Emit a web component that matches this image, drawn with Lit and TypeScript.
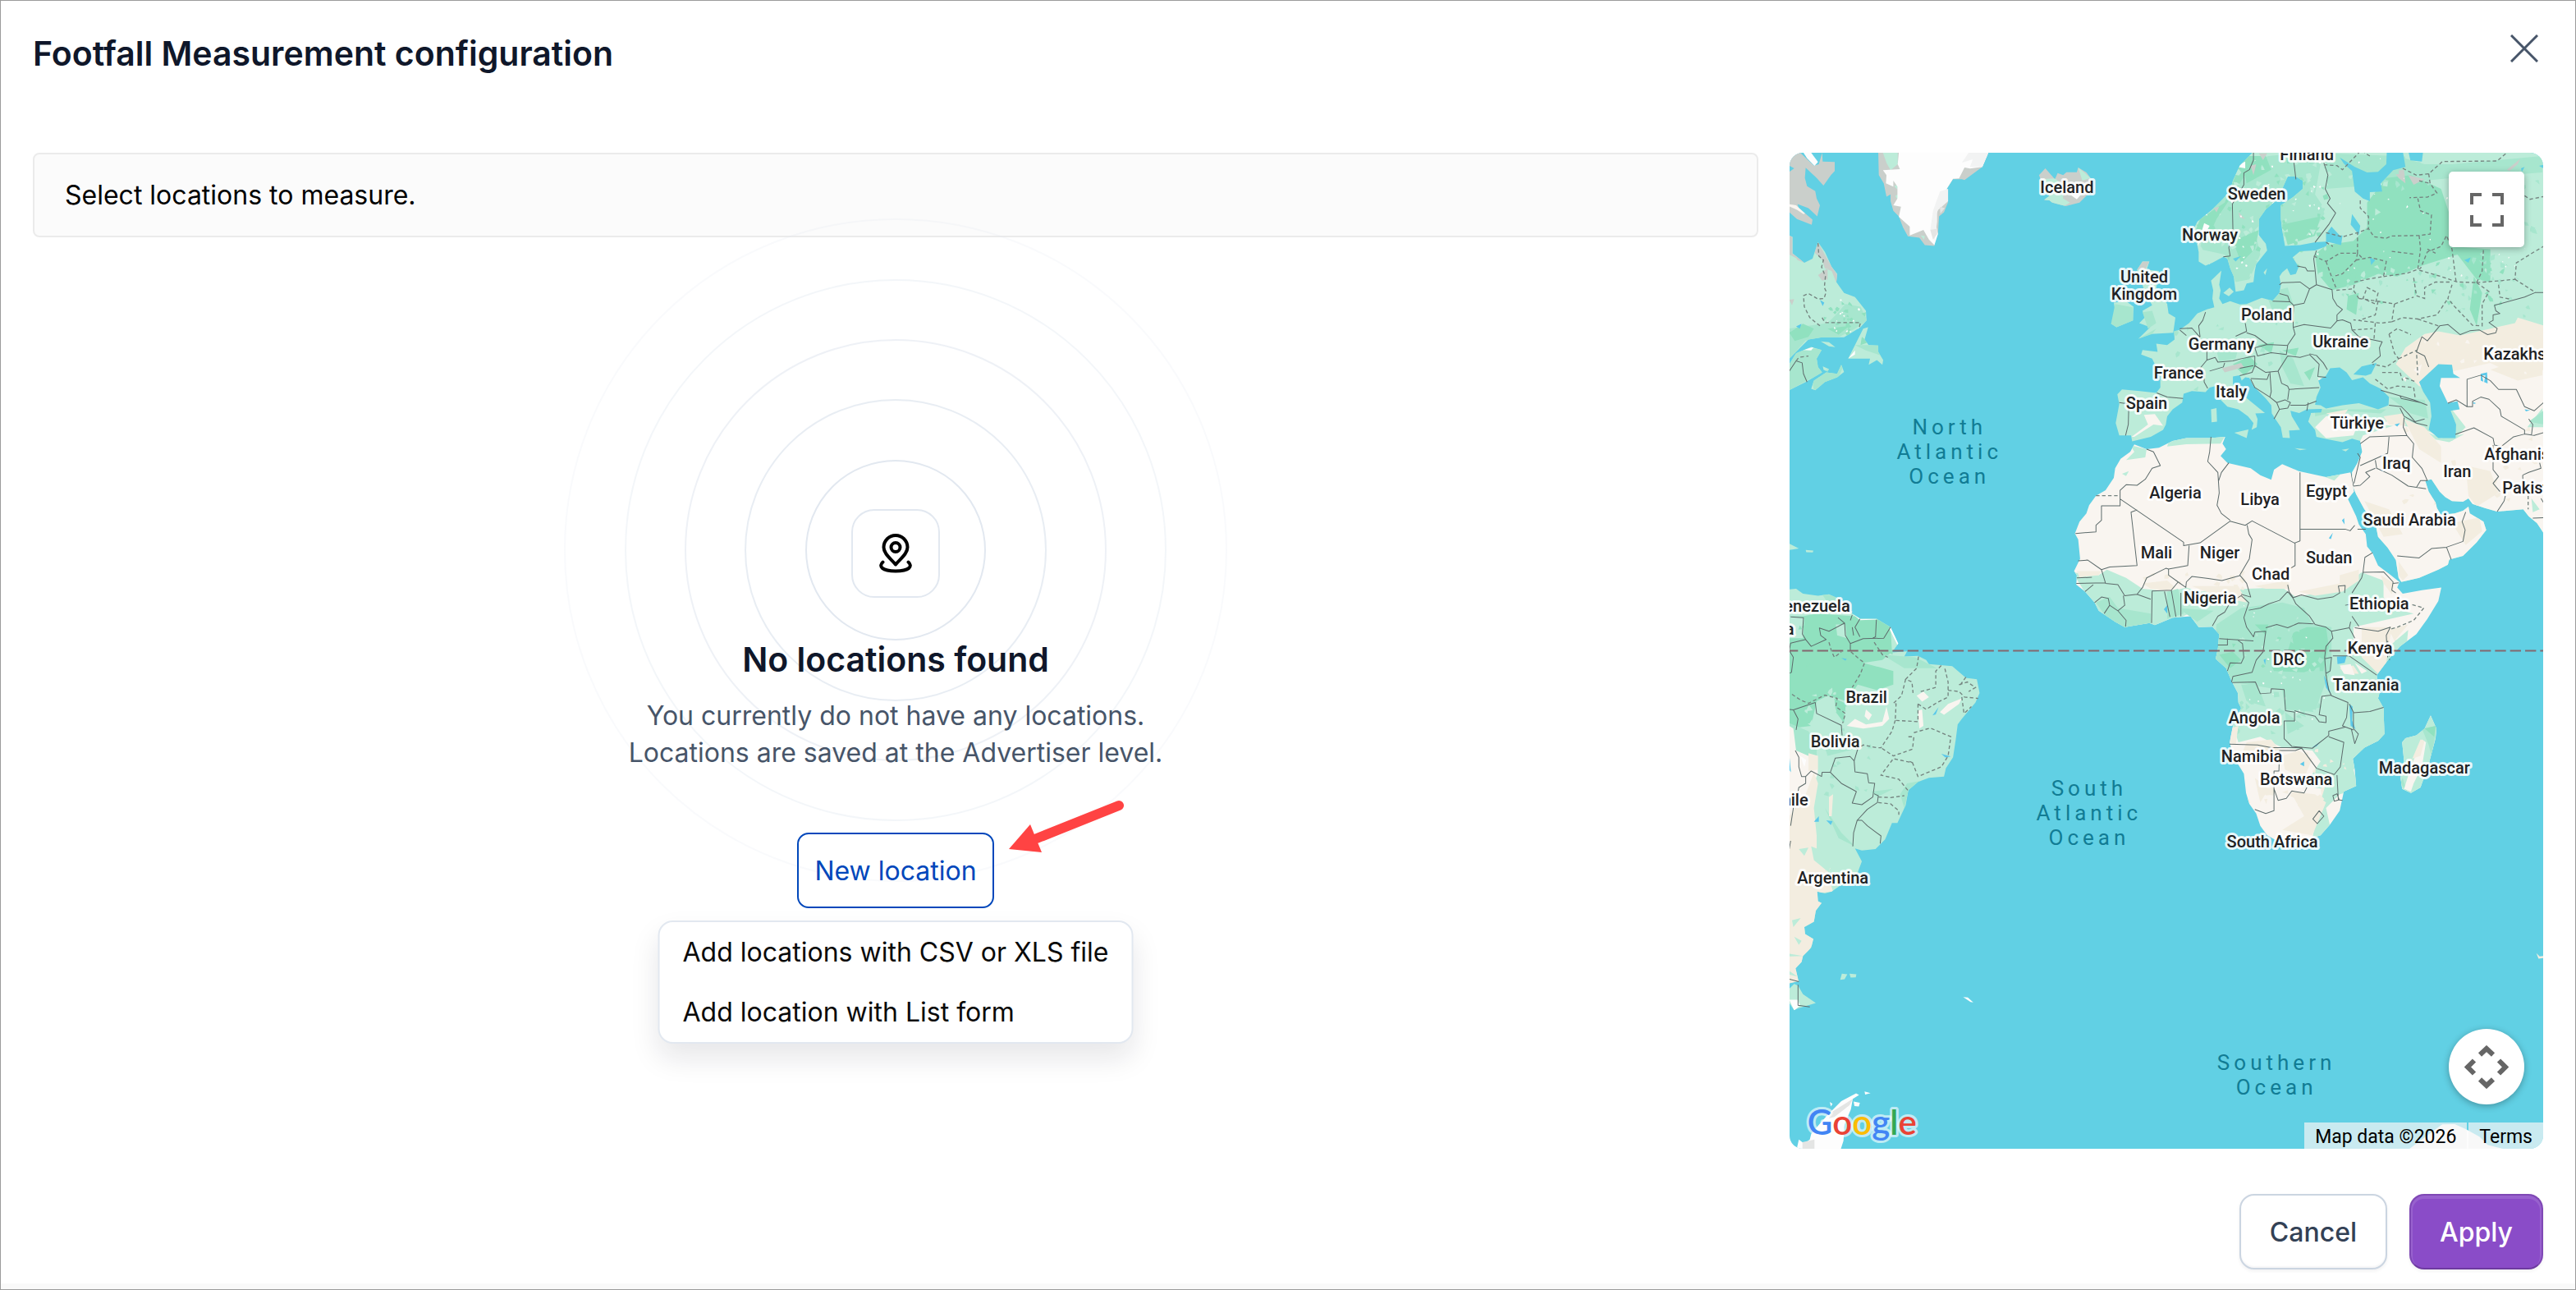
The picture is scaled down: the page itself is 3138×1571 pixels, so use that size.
import { LitElement, css, html, svg } from "lit";
import { customElement, state } from "lit/decorators.js";

interface MapLabel {
  text: string;
  x: number;
  y: number;
  anchor?: "start" | "middle" | "end";
}

/* Country labels, in map canvas pixels (918 x 1212). */
const COUNTRIES: MapLabel[] = [
  { text: "Iceland", x: 338, y: 49 },
  { text: "Sweden", x: 569, y: 57 },
  { text: "Norway", x: 512, y: 107 },
  { text: "Finland", x: 630, y: 9 },
  { text: "United", x: 432, y: 158 },
  { text: "Kingdom", x: 432, y: 179 },
  { text: "Poland", x: 581, y: 204 },
  { text: "Germany", x: 526, y: 240 },
  { text: "Ukraine", x: 671, y: 237 },
  { text: "France", x: 474, y: 275 },
  { text: "Italy", x: 538, y: 298 },
  { text: "Spain", x: 435, y: 312 },
  { text: "Türkiye", x: 691, y: 336 },
  { text: "Kazakhstan", x: 845, y: 252, anchor: "start" },
  { text: "Iraq", x: 739, y: 385 },
  { text: "Iran", x: 813, y: 395 },
  { text: "Afghanistan", x: 846, y: 374, anchor: "start" },
  { text: "Pakistan", x: 868, y: 415, anchor: "start" },
  { text: "Egypt", x: 654, y: 419 },
  { text: "Algeria", x: 470, y: 421 },
  { text: "Libya", x: 573, y: 429 },
  { text: "Saudi Arabia", x: 755, y: 454 },
  { text: "Mali", x: 447, y: 494 },
  { text: "Niger", x: 524, y: 494 },
  { text: "Sudan", x: 657, y: 500 },
  { text: "Chad", x: 586, y: 520 },
  { text: "Nigeria", x: 512, y: 549 },
  { text: "Ethiopia", x: 718, y: 556 },
  { text: "Kenya", x: 707, y: 609 },
  { text: "DRC", x: 608, y: 623 },
  { text: "Tanzania", x: 702, y: 654 },
  { text: "Angola", x: 566, y: 694 },
  { text: "Namibia", x: 563, y: 741 },
  { text: "Botswana", x: 617, y: 769 },
  { text: "Madagascar", x: 773, y: 755 },
  { text: "South Africa", x: 588, y: 845 },
  { text: "Venezuela", x: 74, y: 559, anchor: "end" },
  { text: "Colombia", x: 6, y: 587, anchor: "end" },
  { text: "Chile", x: 23, y: 794, anchor: "end" },
  { text: "Brazil", x: 94, y: 669 },
  { text: "Bolivia", x: 56, y: 723 },
  { text: "Argentina", x: 53, y: 889 },
];

const OCEANS: MapLabel[] = [
  { text: "North", x: 195, y: 343 },
  { text: "Atlantic", x: 195, y: 373 },
  { text: "Ocean", x: 195, y: 403 },
  { text: "South", x: 365, y: 782 },
  { text: "Atlantic", x: 365, y: 812 },
  { text: "Ocean", x: 365, y: 842 },
  { text: "Southern", x: 593, y: 1116 },
  { text: "Ocean", x: 593, y: 1146 },
];

/* Land outlines. The terrain is drawn at three units per pixel in four tiles. */
const NORTH_AMERICA =
  "M60 350 72 355 72 415 115 450 145 435 165 375 190 410 215 465 235 490 232 520 260 560 300 575 340 625 342 660 320 685 260 722 180 722 130 730 90 770 60 800Z M60 820 85 780 140 757 178 768 160 800 165 830 180 850 120 885 60 915Z M140 910 150 880 195 850 235 855 250 822 260 848 235 868 190 885 155 915Z M275 800 300 750 330 690 348 685 335 730 350 750 385 752 385 775 403 805 400 822 380 805 350 822 355 800Z M175 737 205 740 228 758 205 755Z M183 828 205 838 200 847 185 840Z";
const BAFFIN =
  "M60 48 100 48 150 95 168 90 180 48 182 80 226 82 226 115 212 130 185 168 160 140 120 103 117 140 125 170 155 188 160 215 172 240 162 280 130 250 90 235 95 250 145 292 142 311 88 290 60 265Z";
const GREENLAND =
  "M385 48 387 130 405 160 415 208 430 200 430 225 440 260 460 280 475 320 493 353 535 358 555 385 590 388 592 365 603 345 607 280 625 265 640 228 630 210 640 200 635 180 658 145 690 145 700 148 765 100 787 48Z";
const GREENLAND_ICE =
  "M460 48 456 90 464 108 402 112 415 130 413 160 440 172 440 150 455 172 455 215 440 240 468 245 460 282 500 318 500 350 550 330 570 365 590 385 603 345 590 290 610 240 640 190 635 180 658 143 680 142 700 102 720 106 765 100 787 48Z";
const ISLANDS_NORTH =
  "M1330 475 1350 445 1375 445 1365 475 1410 480 1400 540 1440 600 1445 635 1470 650 1462 705 1380 710 1335 727 1378 685 1338 670 1358 650 1350 625 1385 605 1360 560Z M1245 595 1290 590 1317 610 1315 660 1255 685 1235 672 1252 640Z";
const ICELAND =
  "M972 130 995 105 1030 145 1040 122 1060 130 1072 119 1110 119 1115 102 1145 120 1160 140 1160 190 1120 230 1070 243 1020 230 1010 222 990 220 1010 205 985 165Z";
const EURASIA =
  "M378 40 345 75 325 95 300 150 290 185 265 215 225 255 170 300 155 330 165 360 175 410 175 445 200 460 225 450 265 428 280 435 290 470 303 500 310 555 340 550 350 525 375 520 380 480 385 455 425 405 420 380 395 350 395 290 420 255 455 225 480 180 500 135 530 135 555 150 555 180 520 210 475 240 475 290 480 330 490 388 545 385 600 375 650 372 640 390 600 405 545 408 518 430 540 465 530 490 510 495 498 470 480 485 470 500 475 530 470 560 445 588 405 578 350 600 325 602 290 590 262 600 250 580 255 550 250 530 258 478 220 515 228 550 225 580 232 612 205 620 170 635 140 670 105 695 85 700 87 730 60 750 20 745 25 775 -30 768 -35 785 5 800 15 820 35 860 35 905 20 925 -40 918 -105 912 -122 930 -115 965 -128 1035 -115 1080 -72 1080 -68 1102 0 1085 45 1060 55 1040 60 1010 80 985 115 960 120 928 150 918 200 922 215 905 235 900 245 940 280 975 320 985 355 1010 375 1035 368 1060 387 1050 390 1020 382 1000 417 998 370 960 345 940 320 900 300 895 300 865 325 860 332 880 345 868 360 870 375 900 420 945 440 970 442 1000 455 1020 475 1050 482 1088 508 1090 505 1062 545 1060 515 1010 510 990 542 998 570 985 585 1000 575 1030 600 1060 605 1085 650 1095 700 1105 735 1092 765 1100 772 1140 755 1180 735 1215 735 1260 750 1295 780 1350 820 1400 830 1450 865 1490 895 1535 905 1600 915 1615 980 1600 1050 1570 1085 1552 1090 1533 1140 1520 1190 1470 1225 1425 1215 1395 1165 1365 1160 1340 1140 1355 1110 1365 1060 1370 1045 1345 1040 1325 1015 1285 1002 1245 1025 1240 1055 1285 1075 1305 1100 1320 1140 1322 1160 1310 1175 1330 1220 1345 1265 1358 1360 1350 1380 1375 1410 1400 1440 1445 1440 40Z M220 985 240 980 242 1030 222 1032Z M305 1070 357 1058 350 1090Z M265 560 288 540 303 555 285 572Z M525 1126 570 1130 545 1134Z M697 1132 725 1128 712 1138Z M412 485 425 470 418 495Z";
const AFRICA =
  "M730 -75 640 -58 540 -80 480 -105 450 -85 440 -48 400 -65 365 -90 280 -110 255 -135 275 -160 262 -180 272 -205 215 -200 130 -200 80 -190 30 -165 -15 -160 -60 -177 -75 -150 -110 -125 -130 -90 -135 -55 -165 -10 -200 10 -225 45 -235 75 -260 105 -277 148 -265 170 -258 240 -280 285 -270 300 -272 335 -240 360 -205 400 -190 430 -130 470 -95 490 -5 475 15 482 80 455 145 450 175 490 225 488 250 515 245 570 237 605 275 640 297 690 318 730 320 765 330 785 300 850 288 910 300 960 340 1025 348 1095 360 1135 385 1170 400 1215 425 1250 470 1275 560 1270 620 1250 655 1210 690 1160 705 1090 750 1070 745 1010 738 970 780 930 830 905 853 880 850 785 830 750 835 730 825 665 870 605 910 560 970 515 1010 460 1050 395 1061 345 990 355 920 368 900 345 908 325 870 295 830 265 810 220 790 195 785 150 760 115 750 85 720 22 742 -5Z M1022 812 1043 860 1040 895 1015 990 985 1075 950 1095 918 1080 912 1040 925 980 918 910 930 895 970 885 1000 860Z";
const SOUTH_AMERICA =
  "M60 352 85 350 110 368 165 375 205 370 250 390 290 440 320 460 380 460 430 490 458 550 435 582 490 578 480 597 530 595 560 610 570 625 655 632 705 675 745 680 755 730 740 765 690 825 675 845 668 900 658 965 632 1005 625 1035 570 1040 530 1055 495 1085 485 1140 455 1205 435 1205 410 1265 375 1300 325 1305 300 1298 325 1345 310 1385 250 1430 215 1455 190 1462 162 1455 165 1490 178 1497 157 1525 150 1565 115 1585 118 1610 148 1628 140 1660 110 1690 105 1712 83 1735 94 1782 60 1790Z M60 1810 78 1792 92 1798 110 1830 157 1862 90 1882 78 1888 60 1862Z M246 1777 252 1755 272 1757 262 1775Z M280 1755 305 1757 303 1768 284 1769Z M60 185 95 203 60 208Z M120 208 148 210 146 217 122 216Z";

/* Scatters small irregular patches over a box, the same ones on each run. */
function patches(seed: number, count: number, x: number, y: number, w: number, h: number, size: number): string {
  let s = seed;
  const next = () => {
    s = (s * 16807) % 2147483647;
    return s / 2147483647;
  };
  let d = "";
  for (let i = 0; i < count; i++) {
    const cx = x + next() * w;
    const cy = y + next() * h;
    const turn = next() * 6;
    const corners = 3 + Math.floor(next() * 3);
    for (let k = 0; k < corners; k++) {
      const a = turn + (k * 6.28) / corners;
      const r = size * (0.3 + next());
      d += `${k ? "L" : "M"}${Math.round(cx + Math.cos(a) * r)} ${Math.round(cy + Math.sin(a) * r)}`;
    }
    d += "Z";
  }
  return d;
}

const terrain = svg`
  <defs>
    <clipPath id="na"><path d=${NORTH_AMERICA} /></clipPath>
    <clipPath id="ea"><path d=${EURASIA} /></clipPath>
    <clipPath id="af"><path d=${AFRICA} /></clipPath>
    <clipPath id="sa"><path d=${SOUTH_AMERICA} /></clipPath>
    <clipPath id="ic"><path d=${ICELAND} /></clipPath>
  </defs>

  <g transform="translate(-60 -48)">
    <path class="rock" d=${BAFFIN} />
    <path class="snow" d="M112 48 140 48 165 82 152 96 125 68Z" />
    <path class="desert" d="M60 236 85 240 118 270 112 272 88 256 60 244Z" />
    <path class="sea" d="M60 95 78 105 60 118Z" />
    <path class="rock" d=${GREENLAND} />
    <path class="light" d="M402 48 456 48 456 90 430 112 415 85Z" />
    <path class="light" d="M443 170 455 165 455 182Z M447 205 457 200 457 222Z M540 350 555 352 552 365Z" />
    <path class="snow" d=${GREENLAND_ICE} />
    <path class="frost" d="M715 48 690 85 730 72 720 100 765 100 787 48Z M640 180 610 190 585 260 575 330 590 370 600 300 600 260 640 225Z" />
    <path class="shade" d="M575 330 600 325 600 345 585 365Z M610 245 628 250 612 270Z" />
    <path class="rock" d=${ICELAND} />
    <g clip-path="url(#ic)">
      <path class="light" d="M975 145 1030 142 1060 165 1060 215 1085 230 1060 245 980 215Z M1115 102 1160 140 1130 150Z" />
      <path class="snow" d="M1085 200 1135 190 1110 218Z" />
    </g>
    <path class="light" d=${NORTH_AMERICA} />
    <g clip-path="url(#na)">
      <path class="rock" d="M60 350 72 355 72 415 100 440 60 420Z M165 375 150 410 180 440 190 470 215 480 232 522 240 500 215 465Z M60 585 78 582 70 605Z M165 495 200 470 200 510 180 515Z M75 415 115 450 90 440Z" />
      <path class="mid" d="M230 640 265 600 320 610 345 660 300 690 240 722 60 740 60 690 130 680 200 670Z M60 770 200 760 180 850 60 915Z M300 750 385 750 400 790 340 770Z M140 860 260 820 240 870 150 915Z M60 730 130 722 60 800Z" />
      <path class="dark" d="M60 705 110 672 150 690 130 720 80 735Z M200 690 280 680 240 712Z M325 720 350 740 320 750Z" />
      <path class="dark" d=${patches(11, 18, 190, 600, 150, 115, 9)} />
      <path class="snow" d=${patches(5, 14, 200, 580, 140, 130, 5)} />
      <path class="snow" d="M110 768 150 757 140 770Z M275 800 300 770 300 785Z" />
      <path class="lake" d="M172 585 188 595 182 608Z M85 682 105 672 98 690Z" />
    </g>
    <path class="border" d="M60 845 85 808 107 815 112 855 125 885" />
    <path class="state" d="M165 378 168 425 185 440 178 465 192 500 188 540 195 555 187 580 165 582 130 562 112 570 115 610 135 650 172 680M180 650 190 668 320 668 316 685M85 808 95 795 130 790" />
    <path class="light" d=${ISLANDS_NORTH} />
    <path class="mid" d="M1250 600 1315 612 1315 660 1255 685 1235 672Z M1350 630 1385 625 1400 670 1370 690Z M1335 727 1400 690 1385 710Z" />
    <path class="rock" d="M1330 475 1350 445 1375 445 1360 475Z" />
  </g>

  <g transform="translate(1320 -48)">
    <path class="light" d=${EURASIA} />
    <g clip-path="url(#ea)">
      <path class="mid" d="M330 90 430 60 530 50 560 60 620 90 600 200 640 260 600 330 530 370 480 350 470 240 380 330 400 420 360 510 310 520 270 420 180 400 200 290Z M640 50 900 60 1000 90 1100 90 1430 60 1430 120 1300 130 1100 140 900 160 640 180Z" />
      <path class="dark" d="M160 340 180 290 270 230 330 80 350 120 300 200 240 290 200 380Z M300 370 395 330 380 400 330 450Z M860 140 950 130 1060 180 1090 270 1100 390 1240 400 1240 520 1190 510 1120 420 990 460 900 500 830 490 740 530 660 550 610 490 600 420 640 385 740 370 790 320 790 230Z M330 60 420 60 440 110 350 160Z M480 310 620 280 600 350 500 385Z M1180 500 1210 560 1190 680 1165 620Z M300 820 360 790 390 820 340 860Z M390 750 450 740 440 780Z M480 770 540 760 530 790Z M560 850 600 830 580 880Z M720 570 760 560 750 640 715 620Z" />
      <path class="mid" d="M470 770 520 800 560 900 510 890 480 830Z M240 770 320 760 310 800 250 810Z M870 940 1000 950 1020 1020 950 1000Z M600 985 860 985 840 1000 700 990 600 1010Z M420 560 500 540 520 600 450 640Z" />
      <path class="rock" d="M365 95 385 90 375 130Z M395 50 425 50 410 75Z M885 115 925 110 930 160 905 140Z M940 130 1000 145 960 165Z M1300 110 1350 70 1340 90 1310 115Z M230 250 250 245 240 265Z M320 265 345 290 325 285Z M1390 400 1405 395 1400 430 1380 440Z M260 835 330 815 340 830 270 850Z" />
      <path class="dark" d=${patches(7, 60, 170, 60, 480, 420, 11)} />
      <path class="light" d=${patches(21, 60, 180, 60, 460, 440, 12)} />
      <path class="mid" d=${patches(33, 30, 640, 60, 400, 130, 13)} />
      <path class="mid" d=${patches(34, 34, 700, 480, 700, 180, 10)} />
      <path class="dark" d=${patches(44, 26, 720, 440, 600, 160, 11)} />
      <path class="light" d=${patches(51, 26, 720, 450, 600, 90, 12)} />
      <path class="light" d=${patches(52, 12, 640, 70, 240, 230, 13)} />
      <path class="light" d="M1100 180 1434 130 1434 560 1330 500 1260 400 1180 330Z" />
      <path class="mid" d=${patches(53, 22, 1090, 150, 330, 330, 13)} />
      <path class="mid" d=${patches(63, 14, 90, 620, 500, 300, 10)} />
      <path class="snow" d=${patches(71, 46, 200, 70, 420, 430, 5)} />
      <path class="snow" d=${patches(83, 34, 680, 70, 740, 460, 4)} />
      <path class="snow" d="M325 90 345 80 345 105 315 100Z M195 305 215 315 195 350 170 390Z" />

      <path class="sand" d="M930 760 1000 710 1050 700 1130 715 1240 690 1330 670 1340 650 1440 680 1440 1000 980 900 895 820Z" />
      <path class="desert" d="M1030 860 1130 840 1240 815 1330 860 1440 840 1440 1450 890 1650 720 1320 740 1150 775 1080 900 1040 1000 1060 1100 1100 1150 1050 1080 960Z" />
      <path class="desert" d="M600 1050 640 1010 720 1000 760 1030 740 1080 640 1090Z M840 1040 900 1010 930 1050Z M-25 1005 15 1002 45 1045 10 1040 -60 1085 -70 1085 -10 1040Z" />
      <path class="sand" d="M850 1010 920 1000 930 1045 870 1040Z M640 1000 720 985 700 1015Z M925 1020 1000 1050 1060 1120 1060 1180 980 1130Z M1150 1190 1240 1210 1270 1290 1190 1340 1160 1300Z M1240 840 1430 780 1430 860 1340 880Z M780 1320 870 1350 920 1440 850 1450Z M905 1540 940 1590 920 1610 905 1590Z M1100 1400 1200 1380 1210 1430 1150 1480Z" />
      <path class="sand" d=${patches(91, 18, 930, 1030, 480, 300, 12)} />
      <path class="desert" d=${patches(92, 10, 1000, 720, 400, 180, 10)} />
      <path class="light" d="M1015 1070 1060 1090 1145 1075 1090 1105 1040 1095Z M1060 1040 1020 990 1000 940 1020 1060Z M1375 1050 1430 980 1434 1050Z M1390 1310 1420 1350 1395 1360Z" />
      <path class="mid" d="M1380 1030 1434 990 1434 1040Z" />
      <path class="desert" d="M610 870 625 872 618 888Z M920 870 935 865 930 885Z M960 840 990 820 980 860Z" />
    </g>

    <path class="sea" d="M605 940 620 905 612 880 640 862 655 835 690 832 715 850 735 878 775 868 800 890 840 910 870 940 868 970 830 985 760 962 700 970 640 982 620 970 600 968Z M740 857 770 828 825 815 805 855 785 862Z M568 985 625 983 622 996 580 998Z M980 885 1050 820 1100 822 1105 855 1130 870 1060 870 1055 900 1085 962 1120 955 1128 985 1095 990 1115 1040 1113 1090 1050 1090 1015 1060 1025 1010 1020 960 995 920Z" />
    <path class="sea" d="M862 40 920 40 930 100 885 112 840 160 845 190 800 192 800 225 775 215 745 190 735 115 705 88 690 65 745 100 790 120 830 118 860 90Z M940 40 995 40 990 80 948 76Z M640 345 660 318 690 350 700 350 695 385 640 372Z M735 272 765 315 760 348 730 310Z M800 430 820 440 805 458Z M1145 440 1168 430 1160 450Z M300 435 330 425 310 445Z M1418 96 1434 92 1434 105Z M1352 105 1365 100 1355 118Z" />
    <path class="lake" d="M1205 855 1228 850 1230 890 1205 880Z M890 1040 910 1035 900 1048Z M1175 958 1188 962 1180 965Z M1365 985 1385 988 1370 992Z" />
    <path class="desert" d="M1210 862 1222 860 1216 892Z" />

    <path class="border" d="M375 48 375 75 360 110 340 122 340 165 298 235 300 330 285 395 290 425 265 428M523 85 530 145M632 85 647 130 637 180 655 215 645 232 675 268 650 310 600 375M605 405 595 435 600 475 605 530 580 545 545 520 480 522 470 530M535 462 565 468 572 480 598 480M605 530 662 548 665 580 680 605 700 620 680 640 680 662 657 688 560 675 522 685M470 562 500 570 508 592 445 590M508 592 522 605 560 597 580 545M522 605 520 640 520 685 527 710 500 750M680 662 700 658 730 670 735 695 760 720 845 738 835 760 838 790 808 815M200 630 190 660 175 680 180 720M106 690 150 688 165 705 180 722M106 695 130 715 M345 670 350 700 310 718M350 705 380 715 425 748 500 752 495 785 440 778 390 790 380 760 425 748M205 805 235 795 245 812 300 808 330 800 380 790M205 770 205 805 180 835 195 850 195 885 208 908M215 845 265 830 270 815M-70 870M22 925 60 940 118 945M325 862 370 850 380 825 420 850 465 845 500 790M325 835 375 825M380 790 380 825M500 790 545 795 580 785 615 820 610 865 640 868M580 782 605 788 630 815 645 840M465 845 478 890 500 900 505 912 560 908 615 905M365 872 425 875 432 855M365 875 380 905 435 940 440 920 435 850M435 940 460 960 490 950 510 960 500 980 470 985 460 960M510 970 565 970 605 955M470 985 450 1020M575 960 570 990M505 912 500 950M-80 965 -115 960M-80 965 -82 1040 -92 1080" />
    <path class="border" d="M1434 558 1405 558 1365 575 1255 605 1260 625 1275 635 1250 640 1250 660 1235 668 1265 690 1260 705 1230 712 1200 695 1165 698 1130 712 1085 675 1055 680 1010 735 990 720 970 775 1000 790 1015 830M840 915 910 935 960 950 1010 970M870 970 915 975 940 1000 965 1030 1000 1020M910 935 915 945 985 960M910 980 925 1010 970 1035 1010 1045M925 1015 922 1050 935 1080 800 1085 765 1110M870 1085 865 1145 765 1190M820 1170 825 1200 880 1225 940 1265 1005 1275M820 1200 785 1215 800 1230 765 1262 740 1265 730 1215M935 1080 960 1110 955 1160 990 1200 1010 1245 985 1245 970 1270M755 1145 765 1160 755 1200 742 1255M1085 962 1115 950 1155 975 1175 975 1175 955 1205 940 1235 948 1275 985 1280 1010 1365 1060 1365 1075 1325 1085 1280 1120 1255 1115 1250 1090 1180 1052 1112 1076M1155 975 1155 875 1205 860 1240 880 1270 912 1335 912 1365 975 1400 990 1434 960M1365 1075 1400 1080 1434 1070M1380 1020 1395 1040 1390 1080M1250 1115 1250 1205 1270 1230 1250 1255 1275 1285M1358 1225 1380 1215 1425 1200 1420 1180M1358 1225 1360 1260M1295 1300 1290 1320 1265 1358M900 1520 980 1527 1025 1493 1080 1488 1140 1467 1148 1425 1137 1395 1150 1360M1080 1488 1097 1533M1395 1382 1434 1380M1425 1310 1434 1325" />
    <path class="state" d="M632 92 680 95 700 110 760 48M920 105 970 130 1015 125 1065 80 1265 78 1300 48M1015 125 1020 160 1045 195 1010 210 945 212M765 222 765 250 795 280 795 325 755 340 755 415 770 430M975 215 985 260 1025 275 1020 345 980 350 880 352 860 360 815 355 795 325M980 350 985 400 975 475 1060 500 1120 520 1190 522M880 408 960 418M595 425 640 445 690 415 755 415M640 445 660 500 680 550 740 545M755 415 750 440 700 490 665 500M750 440 800 430 860 445 850 500 790 510 745 520 740 550 760 580M850 500 935 488 985 470 1010 410 1060 390 1080 350 1100 400 1115 520M1010 400 1040 415M1190 522 1210 480 1215 400M1190 522 1280 515 1330 510 1335 450 1400 410 1434 390M1330 510 1405 558M1190 522 1235 555 1210 600 1210 680 1175 678 1110 610 1085 580 1100 530M1270 530 1275 575 1310 582M960 505 970 570 1000 580 1000 540 1040 520 1100 520M760 580 830 590 890 600 960 575M830 590 820 640 760 660M890 600 880 665 840 670 740 658M880 665 920 650 975 655 1045 640 1085 580M975 655 1050 680M820 670 815 730 M735 695 810 690M870 710 900 690 950 712M870 710 890 780 905 800 860 830 810 820M905 800 970 770 975 860M845 850 910 850 920 880M820 875 865 910 900 900 960 905 965 940M930 870 970 885M790 540 830 560 820 600 775 580ZM1365 205 1385 218 1434 208M640 340 700 355 755 340M640 375 665 390" />
    <path class="state" d="M1378 1300 1378 1350M800 60 780 48M980 150 1020 160" />
  </g>

  <g transform="translate(1320 1242)">
    <path class="desert" d=${AFRICA} />
    <g clip-path="url(#af)">
      <path class="light" d="M-285 290 -190 300 -160 280 -90 310 -30 350 70 360 130 345 180 360 300 355 350 350 480 345 530 380 690 350 770 290 850 320 850 380 880 420 960 440 740 490 740 580 870 560 940 500 930 600 880 650 900 900 740 1010 760 1080 690 1100 640 1150 660 1240 590 1260 630 1080 560 1070 620 980 590 940 480 930 400 890 320 910 300 850 200 600 140 440 -120 560Z" />
      <path class="light" d="M70 -205 270 -205 255 -180 130 -178 60 -170Z M-75 -175 -15 -160 -20 -130 -90 -120 -60 -150Z M-105 -70 -80 -80 -90 -62Z M620 -65 700 -75 670 -45Z M735 770 850 700 870 900 740 960Z M910 1100 905 880 1000 850 1030 800 1050 860 1040 950 1000 1080 950 1100Z" />
      <path class="mid" d="M-200 400 -150 380 -120 420 0 440 0 500 -130 500Z M240 480 330 420 480 400 560 420 590 480 660 490 660 640 620 740 600 800 490 790 480 720 300 690 230 600Z M60 360 100 350 120 440 60 460Z M100 420 230 430 170 470Z M330 700 390 700 420 780 350 760Z M490 800 560 850 500 880Z M920 1040 935 1090 912 1060Z M990 860 1045 850 1025 960 1015 920Z" />
      <path class="dark" d="M520 510 570 490 640 490 650 560 630 650 570 650 500 580Z M250 590 300 580 330 610 290 640Z M380 480 430 480 420 520Z M440 630 600 640 560 655 450 650Z M1000 860 1040 850 1035 890Z" />
      <path class="mid" d=${patches(15, 30, 320, 480, 300, 400, 13)} />
      <path class="dark" d=${patches(16, 8, 240, 500, 400, 150, 10)} />
      <path class="light" d=${patches(17, 20, 330, 440, 280, 400, 9)} />
      <path class="sand" d="M-270 285 -180 285 -190 300 -260 308Z M-30 330 60 320 90 345 60 355 0 350Z M150 340 320 340 350 400 250 380Z M380 340 500 320 510 350 420 350Z M540 360 690 330 690 300 760 280 760 320 700 360 600 375Z M840 300 890 330 880 370 850 330Z M770 490 880 490 860 620 830 660 770 600Z M350 910 440 900 480 950 430 980 330 960Z M480 960 540 940 590 970 560 1040 490 1010Z M510 1090 600 1100 640 1130 590 1250 480 1230 560 1180Z M290 860 320 850 310 920 290 910Z M690 640 740 630 760 660 710 660Z M620 1080 640 1060 625 1110Z M870 500 940 480 890 540Z M380 1040 430 1080 400 1130Z" />
      <path class="sand" d=${patches(18, 18, -20, 290, 360, 60, 11)} />
      <path class="sand" d=${patches(19, 16, 340, 1080, 280, 150, 16)} />
      <path class="sand" d=${patches(20, 9, 520, 920, 200, 130, 9)} />
      <path class="desert" d="M690 630 730 625 745 665 705 660Z M745 620 790 650 770 660Z M925 1080 950 1000 990 900 1005 910 990 1000 960 1060 950 1090Z" />
      <path class="sand" d="M955 970 985 900 1000 905 985 960Z" />
      <path class="snow" d=${patches(23, 20, 340, 400, 300, 440, 4)} />
      <path class="light" d="M890 540 925 525 915 560Z" />
    </g>
    <path class="lake" d="M680 598 715 595 708 620 682 625Z M725 770 737 780 735 830 748 862 730 850Z M632 665 642 685 658 735 640 710Z M698 100 706 92 708 115Z M650 165 665 145 658 168Z M590 928 620 908 605 925Z M545 990 560 980 560 998Z M412 610 420 605 418 628Z M48 425 60 410 60 440Z" />
    <path class="border" d="M-15 -160 10 -150 35 -100 5 -90 -20 -50 -50 -28 -90 -30 -112 -10 -112 47 -180 47 -180 100 -200 118 -200 142 -275 148M-112 22 120 180 120 192 180 182 290 103 345 118 370 102 525 183 545 175 545 -75M-50 62 -72 70 -50 265 -150 270 -180 280M220 -205 215 -150 208 -115 245 -75 250 0 242 45 258 75 290 100M285 -110 258 -75 248 -45M545 132 710 132 728 138 745 118M755 132 785 132M352 118 358 150 370 170 360 240 325 300 350 330 365 380 330 370M140 192 135 265 65 278 55 275 -15 310 -30 345 -50 370 0 388M65 278 65 300 100 325 75 355 5 358 3 475M100 325 128 345 130 325 150 305 210 312 260 320 325 302M75 355 92 452M50 360 70 452M110 365 110 450M-265 248 -230 245 -180 280 -165 330 -120 335 -95 375 -50 370M-270 310 -215 308M-272 330 -165 328M-240 360 -210 335M-205 400 -180 380 -155 385 -150 410 -170 440M-150 410 -120 430 -95 410 -100 375M-120 430 -90 465 -92 488M225 485 245 450 270 435 290 400 330 375 358 400 340 455 350 490 375 525 380 508 420 505 410 580 385 610 370 655 300 670 295 690M358 428 400 420 430 405 470 392 500 360M500 335 505 360 520 382 550 372 610 388 665 380 690 365 685 340 710 338 708 365M520 385 530 405 580 450 600 480 640 490 660 505 725 492 730 470M527 180 527 265 510 275M420 492 460 480 500 492 540 475 595 478M660 505 665 530 640 560 635 600 640 665 650 720 660 740 720 765 715 820 700 850 740 865M250 532 375 540M245 555 280 555 280 532M315 535 335 550 340 600 330 622 290 620 280 650M297 692 382 690 400 733 438 730 440 715 487 718 492 795 525 800 525 832 487 832 487 897 515 925 590 932 650 885 650 870 710 855M525 795 560 805 600 815 615 835 640 838 640 815 615 810 625 742 660 738M288 917 390 920 440 930 550 930 605 1005 670 1028 692 1000 705 910 650 890M550 932 528 940 470 940 468 1015 450 1015 450 1160 420 1170 380 1155M450 1080 465 1122 495 1115 515 1088 560 1095 570 1075M680 1030 685 1120 700 1122M592 1190 615 1160 632 1180 608 1207ZM665 1105 680 1098 688 1120 670 1125ZM740 802 800 798 850 783M725 770 740 800 740 860 758 880 745 915 732 860M665 595 725 595 825 665M725 492 745 530M745 492 830 505 875 490 860 520 865 600M735 450 760 487M775 290 770 310 735 365M810 218 782 235 775 290 850 288 885 325 880 355M885 330 905 328M880 355 895 365M635 605 660 600 655 650 638 660M710 410 735 405M520 385 500 360" />
    <path class="state" d="M955 408 997 420 960 465 900 490 875 497M865 540 872 610M-200 10 -112 10" />
  </g>

  <g transform="translate(-60 1242)">
    <path class="light" d=${SOUTH_AMERICA} />
    <g clip-path="url(#sa)">
      <path class="dark" d="M110 450 160 440 300 450 380 460 430 490 435 580 400 610 330 620 440 650 440 700 380 720 310 700 270 760 200 740 160 760 140 850 60 860 60 450Z M225 750 270 770 260 840 230 800Z" />
      <path class="light" d="M230 480 265 480 270 530 235 520Z M60 450 115 455 110 530 60 530Z" />
      <path class="mid" d="M60 840 130 870 160 920 160 1060 60 1000Z M490 1060 545 1050 495 1090 480 1150 465 1100Z M280 880 320 930 200 960 180 900Z M360 1090 440 1080 380 1110Z M400 590 520 600 600 640 480 640Z M190 1150 250 1240 300 1290 240 1260Z M180 370 300 380 280 430 200 400Z" />
      <path class="dark" d=${patches(31, 12, 100, 480, 340, 180, 10)} />
      <path class="mid" d=${patches(32, 14, 150, 860, 220, 240, 11)} />
      <path class="light" d=${patches(34, 20, 120, 720, 220, 160, 13)} />
      <path class="desert" d="M60 850 75 860 85 940 130 960 160 980 165 1020 140 1100 90 1130 60 1200Z M525 740 550 725 570 745 545 762Z M530 795 545 790 550 850 535 860Z M610 800 640 770 690 750 680 770 625 810Z M270 850 300 825 340 845 400 835 415 780 425 825 400 850 330 860Z M340 790 362 810 350 830 335 815Z" />
      <path class="sand" d="M130 950 165 960 165 1010 130 1015Z M60 1180 120 1100 150 1020 165 1060 150 1150 160 1250 160 1320 200 1390 220 1455 170 1460 190 1500 150 1600 150 1640 90 1740 95 1790 60 1790Z M205 1110 220 1100 215 1180 205 1180Z M165 1320 180 1330 210 1370 200 1390Z" />
      <path class="light" d="M140 1290 165 1300 210 1360 205 1385 150 1340Z M95 1300 130 1295 115 1325Z M70 1560 102 1552 75 1585Z M78 1620 105 1635 95 1650Z M60 1682 110 1690 60 1692Z M60 1745 90 1765 60 1758Z" />
      <path class="snow" d="M100 960 122 975 115 1000Z M60 1850 90 1850 100 1870 78 1890Z M290 440 320 458 380 456 380 462 318 464Z M430 490 462 550 455 555 425 495Z" />
    </g>
    <path class="lake" d="M583 812 605 782 595 808Z M195 1195 218 1198 212 1212Z M150 1200 168 1180 168 1200Z M615 952 650 962 630 966Z M250 602 270 606 265 612Z M60 955 66 1020 60 1010Z" />
    <path class="border" d="M65 452 112 455 108 515 120 535 140 560 195 535 175 520 170 493 205 505 262 475 265 520 283 550 330 532 405 530 430 490M238 455 262 475M120 535 65 548 60 575 75 600 68 655 60 658M318 460 300 490 318 525M378 463 375 525 365 530M290 445 283 465M290 490 295 520M283 550 283 575M60 790 75 792 92 825 85 865M75 792 155 765 160 805 250 848 253 885M270 900 295 900 295 925 310 935 297 978 282 962 228 968 210 1020 250 1060 305 1090 290 1132 325 1138 365 1110 372 1060 350 1058 345 1025 300 1018 297 978M210 1020 180 1020 178 1035 140 1015 120 1035 105 1035 95 1000 95 965 82 940M120 1035 120 1060 95 1075 90 1100 75 1150 65 1215M370 1098 385 1105 382 1130 345 1155 308 1195 295 1240 292 1290M308 1195 325 1195 345 1215 395 1252 392 1280M60 1775 95 1784M92 1795 92 1870 135 1876M65 1270 60 1300" />
    <path class="state" d="M285 580 320 610 335 620 320 660 290 710M370 545 400 590 420 600M532 597 525 640 485 680 508 690 512 730M485 680 470 740 440 768 450 770 447 830 530 835 530 770M447 830 435 870 395 930 380 930 330 920 310 935M530 770 560 790 600 765 640 745 640 690 628 640M595 700 595 650 615 630M540 725 595 710M640 720 680 725 700 745 750 750M690 745 698 805 725 780M680 700 710 690 740 710 715 725M705 672 685 700M495 890 515 890 510 935 440 960 395 930M515 875 575 858 650 890 640 960 615 1000 530 1035 510 985 440 970 395 1030 460 1045 495 1088M510 985 500 980M385 1110 430 1112 480 1105M385 1130 430 1135 460 1160 460 1175M205 545 215 580 225 600 250 580M70 735 100 755 130 768 190 738 235 750 230 780 265 805 255 840" />
    <path class="equator" d="M52 576H2820" />
  </g>

  <g transform="translate(-60 2532)">
    <path class="snow" d="M695 550 712 552 732 570 722 568Z M335 895 357 901 337 906Z M295 932 318 936 314 950 298 948Z M208 933 218 940 212 950Z" />
    <path class="snow" d="M304 902 315 908 292 922 285 960 262 1015 258 1075 245 1115 85 1115 95 1070 115 1085 135 1070 140 1050 165 1020 200 980 250 930Z" />
    <path class="shade" d="M292 922 280 945 225 988 205 992 215 970Z M108 1080 152 1070 152 1115 108 1115Z" />
  </g>
  <g transform="translate(1320 2532)">
    <path class="snow" d="M930 1115 990 1070 1050 1025 1065 1015 1110 1014 1150 1032 1200 1060 1230 1090 1330 1115Z" />
    <path class="sand" d="M1408 390 1420 402 1434 400 1434 408 1416 410Z" />
  </g>
`;

const expandIcon = svg`<path fill="#666" d="M0 0H14V4H4V14H0Z M27 0H41V14H37V4H27Z M0 27H4V37H14V41H0Z M37 27H41V41H27V37H37Z" />`;

const panIcon = svg`<path fill="none" stroke="#666" stroke-width="6" d="M19 11.500 27 4 35 11.500 M19 41.500 27 49 35 41.500 M12 18.500 4 26.500 12 34.500 M42 18.500 50 26.500 42 34.500" />`;

@customElement("location-map")
export class LocationMap extends LitElement {
  static styles = css`
    :host {
      display: block;
      position: relative;
      overflow: hidden;
      border-radius: 16px;
      background: #61d0e4;
      font-family: Roboto, sans-serif;
    }
    .canvas {
      position: absolute;
      inset: 0;
      width: 100%;
      height: 100%;
    }
    .sea { fill: #61d0e4; }
    .lake { fill: #5bc8ea; }
    .light { fill: #bcecd9; }
    .mid { fill: #a7e6ce; }
    .dark { fill: #90e1bf; }
    .desert { fill: #f9f5f0; }
    .sand { fill: #f3ede0; }
    .rock { fill: #cacfcb; }
    .snow { fill: #fdfdfd; }
    .frost { fill: #f2f3f3; }
    .shade { fill: #e4e5e4; }
    .border {
      fill: none;
      stroke: #5d6b6b;
      stroke-width: 3;
      stroke-linejoin: round;
    }
    .state {
      fill: none;
      stroke: #74837f;
      stroke-width: 4;
      stroke-dasharray: 13 9;
    }
    .equator {
      fill: none;
      stroke: #84686f;
      stroke-width: 6;
      stroke-dasharray: 40 15;
    }
    .country {
      font-size: 20px;
      font-weight: 500;
      fill: #1f2224;
      stroke: #ffffff;
      stroke-opacity: 0.85;
      stroke-width: 6px;
      stroke-linejoin: round;
      paint-order: stroke;
    }
    .ocean {
      font-size: 26px;
      letter-spacing: 5px;
      fill: #117c94;
    }
    .brand {
      font-family: Lato, sans-serif;
      font-size: 42px;
      font-weight: 600;
      stroke: #ffffff;
      stroke-opacity: 0.6;
      stroke-width: 6px;
      stroke-linejoin: round;
      paint-order: stroke;
    }
    .blue { fill: #4285f4; }
    .red { fill: #ea4335; }
    .yellow { fill: #fbbc05; }
    .green { fill: #34a853; }
    .control {
      position: absolute;
      right: 23px;
      display: grid;
      place-items: center;
      width: 92px;
      height: 92px;
      padding: 0;
      border: 0;
      background: #ffffff;
      box-shadow: 0 2px 8px rgba(0, 0, 0, 0.3);
      cursor: pointer;
    }
    .expand {
      top: 23px;
      border-radius: 5px;
    }
    .pan {
      bottom: 54px;
      border-radius: 50%;
    }
    .credits {
      position: absolute;
      right: 0;
      bottom: 0;
      display: flex;
      gap: 2px;
      font-size: 23px;
      line-height: 28px;
      color: #000000;
    }
    .credit {
      padding: 4px 13px 0;
      background: rgba(245, 245, 245, 0.7);
      color: inherit;
      text-decoration: none;
    }
  `;

  private labels(list: MapLabel[], kind: string) {
    return list.map(
      (l) => svg`<text class=${kind} x=${l.x} y=${l.y} text-anchor=${l.anchor ?? "middle"}>${l.text}</text>`
    );
  }

  render() {
    return html`
      <svg class="canvas" viewBox="0 0 918 1212" preserveAspectRatio="xMidYMid slice" role="img" aria-label="Map">
        <g transform="scale(0.333333)">${terrain}</g>
        ${this.labels(COUNTRIES, "country")} ${this.labels(OCEANS, "ocean")}
        <text class="brand" x="22" y="1195"><tspan class="blue">G</tspan><tspan class="red">o</tspan><tspan class="yellow">o</tspan><tspan class="blue">g</tspan><tspan class="green">l</tspan><tspan class="red">e</tspan></text>
      </svg>
      <button class="control expand" type="button" aria-label="Toggle fullscreen view">
        <svg width="41" height="41" viewBox="0 0 41 41">${expandIcon}</svg>
      </button>
      <button class="control pan" type="button" aria-label="Map camera controls">
        <svg width="54" height="53" viewBox="0 0 54 53">${panIcon}</svg>
      </button>
      <div class="credits">
        <span class="credit">Map data ©2026</span>
        <a class="credit" href="#terms">Terms</a>
      </div>
    `;
  }
}

@customElement("app-root")
export class AppRoot extends LitElement {
  static styles = css`
    :host {
      display: block;
      font-family: Inter, sans-serif;
      font-size: 32px;
      color: #000000;
    }
    * {
      box-sizing: border-box;
    }
    h1,
    h2,
    p,
    ul {
      margin: 0;
      padding: 0;
    }
    button {
      font: inherit;
      cursor: pointer;
    }
    .dialog {
      display: flex;
      flex-direction: column;
      min-height: 100vh;
      padding: 0 39px 24px;
      border: 1px solid #9b9b9b;
      background: linear-gradient(#f9f9f9, #f9f9f9) bottom / 100% 7px no-repeat #ffffff;
    }
    .header {
      display: flex;
      align-items: flex-start;
      justify-content: space-between;
      height: 185px;
      padding-top: 34px;
    }
    .title {
      font-size: 41px;
      font-weight: 600;
      line-height: 60px;
      color: #0f172a;
    }
    .close {
      display: grid;
      width: 46px;
      height: 48px;
      place-items: center;
      padding: 0;
      border: 0;
      background: none;
    }
    .body {
      display: grid;
      flex: 1;
      grid-template-columns: 2102fr 918fr;
      gap: 38px;
    }
    .panel {
      display: flex;
      flex-direction: column;
      min-width: 0;
    }
    .info {
      padding: 27px 37px;
      border: 2px solid #ebebeb;
      border-radius: 8px;
      background: #fbfbfb;
      line-height: 45px;
    }
    .empty {
      display: flex;
      flex-direction: column;
      align-items: center;
      padding-top: 331px;
      text-align: center;
    }
    .badge {
      position: relative;
      display: grid;
      place-items: center;
      width: 108px;
      height: 108px;
      border: 2px solid #e2e8f0;
      border-radius: 28px;
      background: #ffffff;
    }
    .rings {
      position: absolute;
      left: 50%;
      top: 50%;
      translate: -50% -50%;
      margin-top: -4px;
      fill: none;
      stroke: #e2e8f0;
      stroke-width: 2;
      pointer-events: none;
    }
    .heading {
      position: relative;
      padding-top: 45px;
      font-size: 41px;
      font-weight: 600;
      line-height: 60px;
      color: #0f172a;
    }
    .hint {
      position: relative;
      padding-top: 16px;
      line-height: 45px;
      color: #475569;
    }
    .picker {
      position: relative;
      margin-top: 75px;
    }
    .new {
      display: block;
      height: 92px;
      padding: 0 19px;
      border: 2px solid #0047bb;
      border-radius: 14px;
      background: none;
      color: #0047bb;
    }
    .menu {
      position: absolute;
      left: 50%;
      top: 107px;
      translate: -50% 0;
      border: 2px solid #e2e8f0;
      border-radius: 18px;
      background: #ffffff;
      box-shadow: 0 18px 34px rgba(15, 23, 42, 0.1);
      list-style: none;
      text-align: left;
    }
    .item {
      display: block;
      width: 100%;
      height: 73px;
      padding: 0 28px;
      border: 0;
      background: none;
      color: #0a0a0a;
      text-align: left;
      white-space: nowrap;
    }
    .pointer {
      position: absolute;
      left: 100%;
      top: -41px;
      margin-left: 16px;
    }
    .footer {
      display: flex;
      justify-content: flex-end;
      gap: 27px;
      padding-top: 55px;
    }
    .action {
      height: 92px;
      border-radius: 18px;
      font-weight: 500;
    }
    .cancel {
      padding: 0 35px;
      border: 2px solid #cbd5e1;
      background: #ffffff;
      box-shadow: 0 2px 4px rgba(15, 23, 42, 0.06), inset 0 -2px 2px rgba(15, 23, 42, 0.04);
      color: #334155;
    }
    .apply {
      padding: 0 35px;
      border: 2px solid #7f48b5;
      border-bottom-color: #6d3aa0;
      background: #8a4cc8;
      box-shadow: 0 2px 4px rgba(15, 23, 42, 0.06), inset 0 2px 0 2px rgba(255, 255, 255, 0.12);
      color: #ffffff;
    }
  `;

  @state() private menuOpen = true;

  private toggleMenu() {
    this.menuOpen = !this.menuOpen;
  }

  render() {
    const rings = [
      { r: 109, o: 1 },
      { r: 183, o: 0.8 },
      { r: 256, o: 0.6 },
      { r: 329, o: 0.4 },
      { r: 403, o: 0.2 },
    ];
    return html`
      <main class="dialog" role="dialog" aria-labelledby="title">
        <header class="header">
          <h1 class="title" id="title">Footfall Measurement configuration</h1>
          <button class="close" type="button" aria-label="Close">
            <svg width="34" height="34" viewBox="0 0 34 34">
              <path d="M1 1 33 33M33 1 1 33" stroke="#475569" stroke-width="3" />
            </svg>
          </button>
        </header>
        <div class="body">
          <section class="panel">
            <p class="info">Select locations to measure.</p>
            <div class="empty">
              <div class="badge">
                <svg class="rings" width="810" height="810" viewBox="-405 -405 810 810">
                  ${rings.map((c) => svg`<circle r=${c.r} opacity=${c.o} />`)}
                </svg>
                <svg width="40" height="48" viewBox="0 0 40 48" fill="none" stroke="#000" stroke-width="4" stroke-linecap="round" stroke-linejoin="round">
                  <path d="M20 37.500C15 31 5.500 25 5.500 16.500A14.500 14.500 0 0 1 34.500 16.500C34.500 25 25 31 20 37.500Z" />
                  <circle cx="20" cy="16.500" r="5.500" />
                  <path d="M4.500 34.500C-1 39.500 3 45.500 20 45.500S41 39.500 35.500 34.500" />
                </svg>
              </div>
              <h2 class="heading">No locations found</h2>
              <p class="hint">
                You currently do not have any locations.<br />Locations are saved at the Advertiser level.
              </p>
              <div class="picker">
                <button class="new" type="button" aria-haspopup="true" aria-expanded=${this.menuOpen} @click=${this.toggleMenu}>
                  New location
                </button>
                <svg class="pointer" width="146" height="68" viewBox="0 0 146 68">
                  <path d="M136 8 36 48" stroke="#ff4343" stroke-width="12" stroke-linecap="round" />
                  <path d="M2 61 28 31 42 65Z" fill="#ff4343" />
                </svg>
                ${this.menuOpen
                  ? html`<ul class="menu">
                      <li><button class="item" type="button">Add locations with CSV or XLS file</button></li>
                      <li><button class="item" type="button">Add location with List form</button></li>
                    </ul>`
                  : null}
              </div>
            </div>
          </section>
          <location-map></location-map>
        </div>
        <footer class="footer">
          <button class="action cancel" type="button">Cancel</button>
          <button class="action apply" type="button">Apply</button>
        </footer>
      </main>
    `;
  }
}
